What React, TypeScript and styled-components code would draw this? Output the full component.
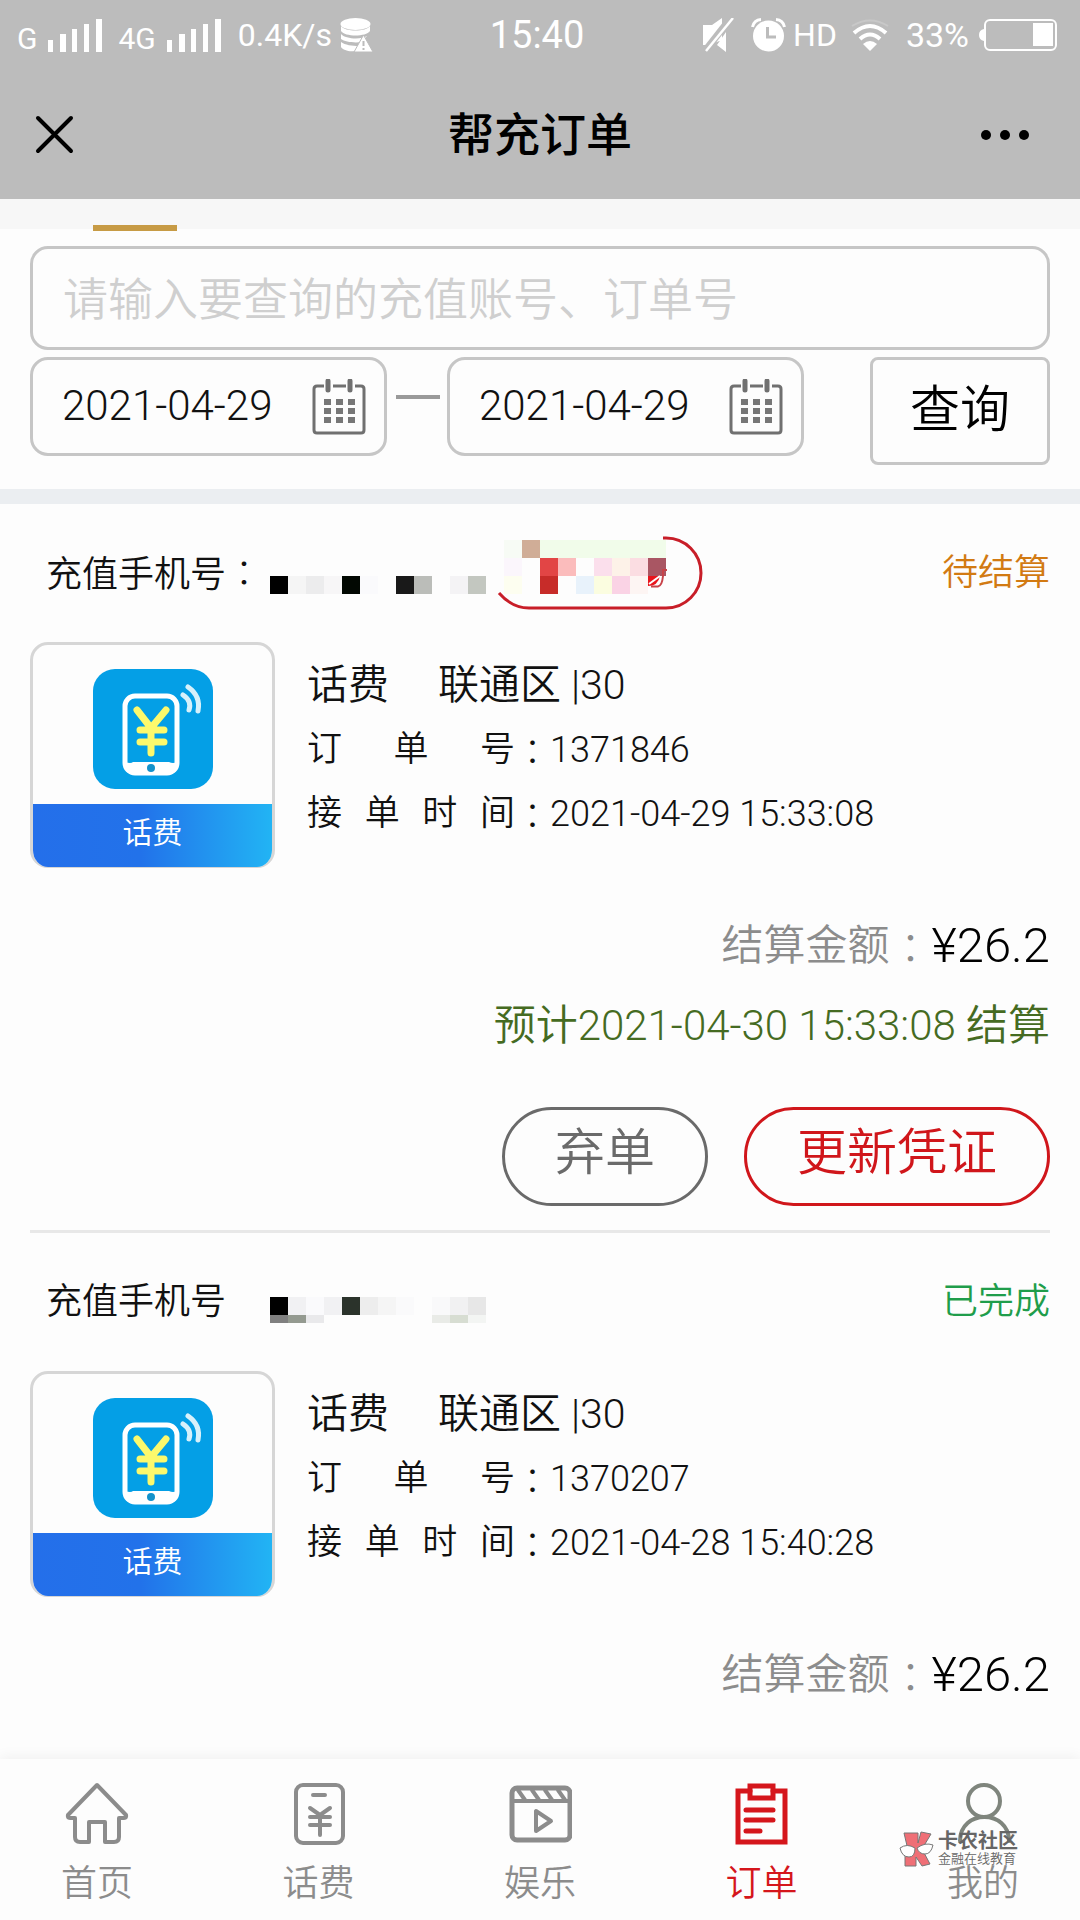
import React from 'react';
import styled, { createGlobalStyle } from 'styled-components';

const sans = `Roboto, "Noto Sans CJK SC", sans-serif`;

const GlobalStyle = createGlobalStyle`
  *, *::before, *::after { box-sizing: border-box; }
  body { margin: 0; background: #fdfdfd; }
  button, input { font: inherit; color: inherit; }
  button { background: none; border: 0; padding: 0; cursor: pointer; }
  svg { display: block; flex: none; }
`;

const Page = styled.div`
  min-height: 100vh;
  display: flex;
  flex-direction: column;
  font-family: ${sans};
  font-weight: 350;
  color: #111;
`;

const Header = styled.header`
  background: #bcbcbc;
`;

const StatusBar = styled.div`
  height: 70px;
  padding: 0 23px 0 17px;
  display: grid;
  grid-template-columns: 1fr auto 1fr;
  align-items: center;
  color: #fff;
  font-weight: 400;
  line-height: 40px;
`;

const StatusGroup = styled.div<{ $end?: boolean }>`
  display: flex;
  align-items: center;
  justify-content: ${(p) => (p.$end ? 'flex-end' : 'flex-start')};
`;

const StatusText = styled.span<{ $size: number; $left?: number; $right?: number; $top?: number }>`
  font-size: ${(p) => p.$size}px;
  margin: 0 ${(p) => p.$right ?? 0}px 0 ${(p) => p.$left ?? 0}px;
  padding-top: ${(p) => p.$top ?? 0}px;
`;

const TitleBar = styled.div`
  height: 129px;
  padding: 0 54px 0 32px;
  display: grid;
  grid-template-columns: 68px 1fr 46px;
  align-items: center;
  color: #000;
`;

const Title = styled.h1`
  margin: 0;
  text-align: center;
  font-size: 46px;
  line-height: 60px;
  font-weight: 500;
`;

const TabStrip = styled.div`
  height: 30px;
  padding-left: 93px;
  background: #f7f7f7;
  display: flex;
  align-items: flex-end;
`;

const TabIndicator = styled.span`
  width: 84px;
  height: 6px;
  margin-bottom: -2px;
  background: #c79b45;
`;

const SearchForm = styled.form`
  display: flex;
  flex-direction: column;
  gap: 7px;
  padding: 17px 30px 24px;
  border-bottom: 15px solid #ebeef1;
`;

const SearchInput = styled.input`
  width: 100%;
  height: 104px;
  padding: 4px 30px 0;
  border: 3px solid #c6c6c6;
  border-radius: 18px;
  background: transparent;
  font-size: 45px;
  &::placeholder { color: #cfcfcf; opacity: 1; }
`;

const FilterRow = styled.div`
  display: flex;
  align-items: flex-start;
`;

const DateField = styled.div`
  flex: 0 1 357px;
  min-width: 0;
  height: 99px;
  padding: 0 18px 0 29px;
  display: flex;
  align-items: center;
  border: 3px solid #c6c6c6;
  border-radius: 18px;
`;

const DateInput = styled.input`
  flex: 1;
  width: 0;
  border: 0;
  padding: 0 0 2px;
  background: transparent;
  font-size: 42px;
  line-height: 60px;
`;

const Dash = styled.span`
  width: 44px;
  height: 4px;
  margin: 38px 7px 0 9px;
  background: #9a9a9a;
`;

const QueryButton = styled.button`
  width: 180px;
  height: 108px;
  margin-left: auto;
  padding-bottom: 12px;
  border: 3px solid #c6c6c6;
  border-radius: 8px;
  color: #000;
  font-size: 50px;
`;

const Orders = styled.main`
  flex: 1;
  padding: 0 30px;
`;

const Order = styled.article`
  padding: 32px 0 24px;
  border-bottom: 3px solid #e8e8e8;
  &:last-child { border-bottom: 0; }
`;

const OrderHead = styled.div`
  height: 74px;
  padding-left: 16px;
  display: flex;
  align-items: center;
  font-size: 36px;
  line-height: 60px;
`;

const PhoneLabel = styled.span`
  width: 216px;
  white-space: nowrap;
`;

const Colon = styled.span`
  font-family: "Noto Sans CJK JP", sans-serif;
  font-weight: 300;
`;

const State = styled.span<{ $color: string }>`
  margin-left: auto;
  color: ${(p) => p.$color};
`;

const OrderBody = styled.div`
  display: flex;
  gap: 32px;
  margin-top: 32px;
`;

const Tile = styled.div`
  width: 245px;
  height: 226px;
  border: 3px solid #d6d6d6;
  border-bottom-width: 1px;
  border-radius: 18px;
  overflow: hidden;
  display: flex;
  flex-direction: column;
  justify-content: space-between;
  align-items: center;
  padding-top: 24px;
`;

const TileName = styled.div`
  align-self: stretch;
  height: 63px;
  text-align: center;
  background: linear-gradient(90deg, #246fea 0%, #2272ea 45%, #22b4f4 100%);
  color: #fff;
  font-size: 30px;
  line-height: 58px;
`;

const Details = styled.div`
  padding-top: 10px;
`;

const Product = styled.div`
  display: flex;
  gap: 49px;
  font-size: 41px;
  line-height: 66px;
`;

const Field = styled.div`
  display: flex;
  font-size: 35px;
  line-height: 64px;
`;

const FieldLabel = styled.span`
  width: 208px;
  display: flex;
  justify-content: space-between;
`;

const FieldValue = styled.span`
  font-size: 36px;
`;

const SumRow = styled.div`
  margin-top: 38px;
  display: flex;
  justify-content: flex-end;
  align-items: center;
  line-height: 80px;
  font-size: 42px;
  color: #8c8c8c;
`;

const Sum = styled.strong`
  font-size: 49px;
  font-weight: 300;
  color: #000;
`;

const Estimate = styled.div`
  text-align: right;
  font-size: 42px;
  line-height: 80px;
  color: #456b22;
`;

const Actions = styled.div`
  margin-top: 41px;
  display: flex;
  justify-content: flex-end;
  gap: 36px;
`;

const PillButton = styled.button<{ $color: string }>`
  height: 99px;
  padding: 0 50px 8px;
  border: 3px solid ${(p) => p.$color};
  border-radius: 50px;
  color: ${(p) => p.$color};
  font-size: 50px;
  line-height: 60px;
`;

const BottomNav = styled.nav`
  position: sticky;
  bottom: 0;
  height: 161px;
  padding: 20px 60px 0;
  display: flex;
  justify-content: space-between;
  background: #fdfdfd;
  box-shadow: 0 -3px 12px rgba(0, 0, 0, 0.05);
`;

const NavItem = styled.a<{ $active?: boolean }>`
  width: 74px;
  display: flex;
  flex-direction: column;
  align-items: center;
  gap: 20px;
  color: ${(p) => (p.$active ? '#d5161c' : '#8c8c8c')};
  text-decoration: none;
  font-size: 36px;
  line-height: 38px;
  white-space: nowrap;
`;

const Watermark = styled.div`
  position: absolute;
  right: 62px;
  bottom: 53px;
  display: flex;
  gap: 4px;
  color: #666;
`;

const WatermarkText = styled.div`
  display: flex;
  flex-direction: column;
  font-size: 13px;
  line-height: 13px;
  b { font-size: 20px; line-height: 21px; font-weight: 700; }
`;

const SignalBars = () => (
  <svg width="54" height="34" viewBox="0 0 54 34" fill="#fff">
    <path d="M0 22h5v12H0zM12 16h6v18h-6zM24 11h5v23h-5zM36 6h5v28h-5zM48 1h6v33h-6z" />
  </svg>
);

const DataIcon = () => (
  <svg width="33" height="34" viewBox="0 0 33 34">
    <ellipse cx="15.500" cy="6" rx="15" ry="6" fill="#fff" />
    <path d="M1 8c4 6 25 6 29 0v5c-4 6-25 6-29 0zM1 16c4 5 20 6 26 2l-5 6C14 25 5 24 1 21zM1 24c4 3 11 4 18 4l-4 5C9 34 3 32 1 29z" fill="#fff" />
    <path d="M23.500 17 33 34H14z" fill="#fff" stroke="#bcbcbc" strokeWidth="1" />
    <path d="M23.500 23v5M23.500 30v2" stroke="#bcbcbc" strokeWidth="2" />
  </svg>
);

const MuteIcon = () => (
  <svg width="32" height="34" viewBox="0 0 32 34">
    <path d="M1 7h9L20 0v22L7 27H1zM24 14v20l-9-7z" fill="#fff" />
    <path d="M28 1 3 33" stroke="#bcbcbc" strokeWidth="7" />
    <path d="M31 0 4 33" stroke="#fff" strokeWidth="2.500" />
  </svg>
);

const AlarmIcon = () => (
  <svg width="35" height="34" viewBox="0 0 35 34" fill="none">
    <circle cx="17.500" cy="18" r="15.500" fill="#fff" />
    <path d="M1.500 9Q3 2 10 1.500M33.500 9Q32 2 25 1.500" stroke="#fff" strokeWidth="3" />
    <path d="M16.500 9v10H25" stroke="#bcbcbc" strokeWidth="3" />
  </svg>
);

const WifiIcon = () => (
  <svg width="38" height="32" viewBox="0 0 38 32" fill="none">
    <path d="M1 7Q19-4 37 7" stroke="#c8c8c8" strokeWidth="2" />
    <path d="M3 14Q19 0 35 14M9 20Q19 11 29 20" stroke="#fff" strokeWidth="4" />
    <path d="M12 25Q19 19 26 25L19 32z" fill="#fff" />
  </svg>
);

const BatteryIcon = () => (
  <svg width="78" height="32" viewBox="0 0 78 32" fill="none">
    <path d="M5 10Q0 11 0 16T5 22z" fill="#fff" />
    <rect x="6" y="1" width="71" height="30" rx="5" stroke="#fff" strokeWidth="2" />
    <rect x="54" y="4" width="20" height="23" fill="#fff" />
  </svg>
);

const CloseIcon = () => (
  <svg width="45" height="45" viewBox="0 0 45 45" stroke="#000" strokeWidth="4" strokeLinecap="round">
    <path d="M6 6l33 33M39 6 6 39" />
  </svg>
);

const MoreIcon = () => (
  <svg width="50" height="12" viewBox="0 0 50 12" fill="#000">
    <circle cx="6" cy="6" r="5" />
    <circle cx="25" cy="6" r="5" />
    <circle cx="44" cy="6" r="5" />
  </svg>
);

const CalendarIcon = () => (
  <svg width="54" height="56" viewBox="0 0 54 56" fill="none" stroke="#707070" strokeWidth="3">
    <path d="M12 7H5Q2 7 2 10V51Q2 54 5 54H49Q52 54 52 51V10Q52 7 49 7H43M21 7H34" />
    <path d="M16 2v9M38 2v9" strokeWidth="5" strokeLinecap="round" />
    <path d="M12 23h31M12 32h31M12 41h31" stroke="#777" strokeWidth="6" strokeDasharray="7 5" />
  </svg>
);

const RechargeIcon = () => (
  <svg width="120" height="120" viewBox="0 0 120 120" fill="none">
    <rect width="120" height="120" rx="22" fill="#049fe6" />
    <rect x="32" y="27" width="52" height="77" rx="10" stroke="#fff" strokeWidth="5" />
    <path d="M32 93q6 2 8 0h36q4 2 8 0v4q0 8-8 8H40q-8 0-8-8z" fill="#fff" />
    <circle cx="58" cy="99" r="4" fill="#1492cb" />
    <path d="M44 41 58 59 73 41M58 59v25M47 61h24M47 73h24" stroke="#fcf96c" strokeWidth="7" strokeLinecap="round" strokeLinejoin="round" />
    <path d="M90 26q9 6 6 15M95 18q13 9 10 24" stroke="#d7f1fb" strokeWidth="5" strokeLinecap="round" />
  </svg>
);

type Cell = [number, number, string, number?];

const pendingCells: Cell[] = [
  [8, 40, '#000000'], [26, 40, '#f5f5f5'], [44, 40, '#ececed'], [62, 40, '#f7f6f7'], [80, 40, '#020802'],
  [98, 40, '#fafafc'], [134, 40, '#191919'], [152, 40, '#bbbdb9'], [188, 40, '#f4f3f5'], [206, 40, '#c3c7c0'],
  [242, 4, '#f7fbf5'], [260, 4, '#d0ad97'], [278, 4, '#f1fcea', 126],
  [242, 22, '#fbf6fc'], [278, 22, '#e24545'], [296, 22, '#fbbcbc'], [332, 22, '#fbdfec'], [350, 22, '#fdf2e8'],
  [368, 22, '#fbdde2'], [386, 22, '#a95663'],
  [242, 40, '#fdfef0'], [278, 40, '#c72c29'], [314, 40, '#e8f2fb'], [332, 40, '#fbfde0'], [350, 40, '#fad3e5'],
  [368, 40, '#fdf5f3'],
];

const doneCells: Cell[] = [
  [8, 32, '#000000'], [26, 32, '#f1f1f3'], [44, 32, '#fafafc'], [62, 32, '#f1f1f3'], [80, 32, '#2b332b'],
  [98, 32, '#ededed'], [116, 32, '#f5f5f5'], [134, 32, '#fafafb'], [170, 32, '#f9f9fa'], [188, 32, '#f1f1f2'],
  [206, 32, '#e7e7e7'],
];

const tailCells: Cell[] = [
  [8, 50, '#808080'], [26, 50, '#949a90'], [44, 50, '#e9e9eb'], [170, 50, '#e9ebe7'], [188, 50, '#d7ddd2'],
  [206, 50, '#f3f5f3'],
];

const Cells = ({ cells, height = 18 }: { cells: Cell[]; height?: number }) => (
  <>
    {cells.map(([x, y, fill, width = 18]) => (
      <rect key={`${x}-${y}`} x={x} y={y} width={width} height={height} fill={fill} />
    ))}
  </>
);

const PendingMask = () => (
  <svg width="442" height="74" viewBox="0 0 442 74" fill="none" aria-hidden="true">
    <Cells cells={pendingCells} />
    <path d="M386 40h12Q396 50 386 50z" fill="#e8141c" />
    <path d="M387 48 398 40" stroke="#fff" strokeWidth="2" />
    <path d="M405 34H401V40Q400 50 396 50.500H389" stroke="#c84349" strokeWidth="2" />
    <path d="M401 2H404A35 35 0 0 1 404 72H267Q250 72 237 57" stroke="#c81e28" strokeWidth="3" />
  </svg>
);

const DoneMask = () => (
  <svg width="442" height="74" viewBox="0 0 442 74" aria-hidden="true">
    <Cells cells={doneCells} />
    <Cells cells={tailCells} height={8} />
  </svg>
);

const line = { fill: 'none', stroke: 'currentColor', strokeWidth: 4, strokeLinejoin: 'round', strokeLinecap: 'round' } as const;

const HomeIcon = () => (
  <svg width="64" height="66" viewBox="0 0 64 66" {...line}>
    <path d="M32 6 3 36Q2 39 5 39H10V58Q10 63 15 63H24V43H40V63H49Q54 63 54 58V39H59Q62 39 61 36Z" />
  </svg>
);

const PhoneIcon = () => (
  <svg width="64" height="66" viewBox="0 0 64 66" {...line}>
    <rect x="9" y="6" width="47" height="58" rx="7" />
    <path d="M26 16h12M23 29 33 36 43 29M23 38h20M23 46h20M33 37v19" />
  </svg>
);

const VideoIcon = () => (
  <svg width="64" height="66" viewBox="0 0 64 66" {...line}>
    <rect x="4" y="9" width="58" height="52" rx="5" strokeWidth="5" />
    <path d="M4 22H62M10 11l7 10M24 11l7 10M37 11l7 10M50 11l7 10M28 32V52L43 42Z" />
  </svg>
);

const OrderIcon = () => (
  <svg width="64" height="66" viewBox="0 0 64 66" {...line} strokeWidth={5} strokeLinejoin="miter">
    <path d="M20 12H8V63H55V12H43M16 31H43M16 41H43M16 52H30" />
    <path d="M20 7H43V19H20Z" />
  </svg>
);

const UserIcon = () => (
  <svg width="64" height="66" viewBox="0 0 64 66" {...line} stroke="#7f857d">
    <circle cx="33" cy="22" r="16" />
    <path d="M9 62C9 30 58 30 58 62" />
  </svg>
);

const WatermarkLogo = () => (
  <svg width="35" height="36" viewBox="0 0 35 36" stroke="#777" strokeWidth="1">
    <path d="M5 2H19V12L22 1 32 3 23 18 31 33 23 35 17 26V35H6V25L9 19Z" fill="#ef6f76" />
    <path d="M1 17Q8 12 16 17 16 26 10 26 3 26 1 17ZM18 17Q26 11 34 14 32 23 26 23 20 23 18 17Z" fill="#fff" />
  </svg>
);

interface OrderData {
  id: string;
  time: string;
  state: string;
  color: string;
  colon: boolean;
  estimate?: string;
  Mask: () => React.JSX.Element;
}

const orders: OrderData[] = [
  { id: '1371846', time: '2021-04-29 15:33:08', state: '待结算', color: '#d27a12', colon: true, estimate: '预计2021-04-30 15:33:08 结算', Mask: PendingMask },
  { id: '1370207', time: '2021-04-28 15:40:28', state: '已完成', color: '#1f9d4b', colon: false, Mask: DoneMask },
];

const tabs = [
  { name: '首页', Icon: HomeIcon },
  { name: '话费', Icon: PhoneIcon },
  { name: '娱乐', Icon: VideoIcon },
  { name: '订单', Icon: OrderIcon, active: true },
  { name: '我的', Icon: UserIcon },
];

const DetailField = ({ label, value }: { label: string; value: string }) => (
  <Field>
    <FieldLabel>
      {[...label].map((ch) => (
        <span key={ch}>{ch}</span>
      ))}
    </FieldLabel>
    <Colon>：</Colon>
    <FieldValue>{value}</FieldValue>
  </Field>
);

const OrderCard = ({ order }: { order: OrderData }) => (
  <Order>
    <OrderHead>
      <PhoneLabel>
        充值手机号{order.colon && <Colon>：</Colon>}
      </PhoneLabel>
      <order.Mask />
      <State $color={order.color}>{order.state}</State>
    </OrderHead>
    <OrderBody>
      <Tile>
        <RechargeIcon />
        <TileName>话费</TileName>
      </Tile>
      <Details>
        <Product>
          <span>话费</span>
          <span>联通区 |30</span>
        </Product>
        <DetailField label="订单号" value={order.id} />
        <DetailField label="接单时间" value={order.time} />
      </Details>
    </OrderBody>
    <SumRow>
      结算金额<Colon>：</Colon>
      <Sum>¥26.2</Sum>
    </SumRow>
    {order.estimate && (
      <>
        <Estimate>{order.estimate}</Estimate>
        <Actions>
          <PillButton type="button" $color="#6a6a6a">弃单</PillButton>
          <PillButton type="button" $color="#d0161b">更新凭证</PillButton>
        </Actions>
      </>
    )}
  </Order>
);

const DatePicker = ({ label }: { label: string }) => (
  <DateField>
    <DateInput type="text" aria-label={label} defaultValue="2021-04-29" />
    <button type="button" aria-label={`选择${label}`}>
      <CalendarIcon />
    </button>
  </DateField>
);

export default function App() {
  return (
    <Page>
      <GlobalStyle />
      <Header>
        <StatusBar>
          <StatusGroup>
            <StatusText $size={30} $right={11} $top={8}>G</StatusText>
            <SignalBars />
            <StatusText $size={30} $left={16} $right={11} $top={8}>4G</StatusText>
            <SignalBars />
            <StatusText $size={32} $left={17} $right={8}>0.4K/s</StatusText>
            <DataIcon />
          </StatusGroup>
          <StatusText $size={38}>15:40</StatusText>
          <StatusGroup $end>
            <MuteIcon />
            <StatusText $size={32} $left={17} $right={0}><AlarmIcon /></StatusText>
            <StatusText $size={32} $left={7} $right={14}>HD</StatusText>
            <WifiIcon />
            <StatusText $size={34} $left={17} $right={10}>33%</StatusText>
            <BatteryIcon />
          </StatusGroup>
        </StatusBar>
        <TitleBar>
          <button type="button" aria-label="关闭"><CloseIcon /></button>
          <Title>帮充订单</Title>
          <button type="button" aria-label="更多"><MoreIcon /></button>
        </TitleBar>
      </Header>
      <TabStrip>
        <TabIndicator />
      </TabStrip>
      <SearchForm onSubmit={(e) => e.preventDefault()}>
        <SearchInput type="text" aria-label="查询" placeholder="请输入要查询的充值账号、订单号" />
        <FilterRow>
          <DatePicker label="开始日期" />
          <Dash />
          <DatePicker label="结束日期" />
          <QueryButton type="submit">查询</QueryButton>
        </FilterRow>
      </SearchForm>
      <Orders>
        {orders.map((order) => (
          <OrderCard key={order.id} order={order} />
        ))}
      </Orders>
      <BottomNav>
        {tabs.map(({ name, Icon, active }) => (
          <NavItem key={name} href="#" $active={active}>
            <Icon />
            {name}
          </NavItem>
        ))}
        <Watermark>
          <WatermarkLogo />
          <WatermarkText>
            <b>卡农社区</b>
            <span>金融在线教育</span>
          </WatermarkText>
        </Watermark>
      </BottomNav>
    </Page>
  );
}
